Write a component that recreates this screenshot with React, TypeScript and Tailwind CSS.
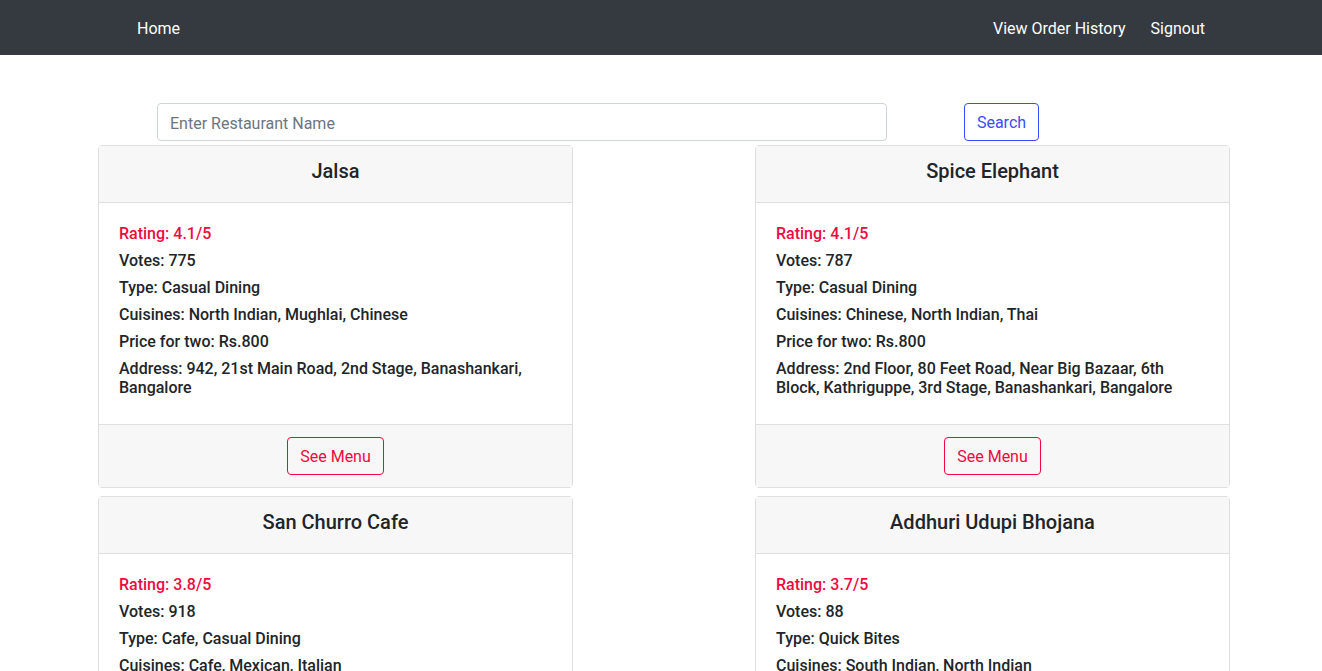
import React from "react";

type Restaurant = {
  name: string;
  rating: string;
  votes: number;
  type: string;
  cuisines: string;
  price: string;
  address: string;
};

const restaurants: Restaurant[] = [
  {
    name: "Jalsa",
    rating: "4.1/5",
    votes: 775,
    type: "Casual Dining",
    cuisines: "North Indian, Mughlai, Chinese",
    price: "Rs.800",
    address: "942, 21st Main Road, 2nd Stage, Banashankari, Bangalore",
  },
  {
    name: "Spice Elephant",
    rating: "4.1/5",
    votes: 787,
    type: "Casual Dining",
    cuisines: "Chinese, North Indian, Thai",
    price: "Rs.800",
    address: "2nd Floor, 80 Feet Road, Near Big Bazaar, 6th Block, Kathriguppe, 3rd Stage, Banashankari, Bangalore",
  },
  {
    name: "San Churro Cafe",
    rating: "3.8/5",
    votes: 918,
    type: "Cafe, Casual Dining",
    cuisines: "Cafe, Mexican, Italian",
    price: "Rs.800",
    address: "1112, Next to KIMS Medical College, 17th Cross, 2nd Stage, Banashankari, Bangalore",
  },
  {
    name: "Addhuri Udupi Bhojana",
    rating: "3.7/5",
    votes: 88,
    type: "Quick Bites",
    cuisines: "South Indian, North Indian",
    price: "Rs.300",
    address: "1st Floor, Annakuteera, 3rd Stage, Banashankari, Bangalore",
  },
];

function RestaurantCard({ r }: { r: Restaurant }) {
  return (
    <div className="flex flex-col rounded border border-[#dfdfdf] bg-white">
      <div className="border-b border-[#dfdfdf] bg-[#f7f7f7] px-5 pt-[13px] pb-3 text-center">
        <h5 className="mb-[7px] text-[20px] leading-[24px] font-medium text-[#212529]">{r.name}</h5>
      </div>
      <div className="px-5 pt-[21px] pb-[19px] text-[16px] leading-[19px] font-medium text-[#212529]">
        <h6 className="mb-2 text-[#ee0a3f]">Rating: {r.rating}</h6>
        <h6 className="mb-2">Votes: {r.votes}</h6>
        <h6 className="mb-2">Type: {r.type}</h6>
        <h6 className="mb-2">Cuisines: {r.cuisines}</h6>
        <h6 className="mb-2">Price for two: {r.price}</h6>
        <h6 className="mb-2">Address: {r.address}</h6>
      </div>
      <div className="flex justify-center border-t border-[#dfdfdf] bg-[#f7f7f7] px-5 py-3">
        <button className="h-[38px] rounded border border-[#ee0a3f] bg-transparent px-3 pt-[2px] text-[16px] text-[#ee0a3f]">
          See Menu
        </button>
      </div>
    </div>
  );
}

export default function App() {
  return (
    <div className="min-h-screen bg-white font-['Roboto','Liberation_Sans',sans-serif] text-[16px]">
      <nav className="flex h-[55px] items-center justify-between bg-[#343a40] pt-[2px] pl-[137px] pr-[117px] text-white">
        <a className="leading-6" href="#">Home</a>
        <div className="flex gap-[25px]">
          <a className="leading-6" href="#">View Order History</a>
          <a className="leading-6" href="#">Signout</a>
        </div>
      </nav>

      <div className="mt-[48px] flex items-center pl-[157px]">
        <input
          className="h-[38px] w-[730px] rounded border border-[#ced4da] px-3 pt-[2px] text-[16px] text-[#495057] outline-none placeholder:text-[#6c757d]"
          placeholder="Enter Restaurant Name"
        />
        <button className="ml-[77px] h-[38px] w-[75px] rounded border border-[#3b4cff] bg-white pt-[2px] text-[16px] text-[#3b4cff]">
          Search
        </button>
      </div>

      <div className="mt-[4px] ml-[98px] grid w-[1132px] grid-cols-[475px_475px] justify-between gap-y-2">
        {restaurants.map((r) => (
          <RestaurantCard key={r.name} r={r} />
        ))}
      </div>
    </div>
  );
}
